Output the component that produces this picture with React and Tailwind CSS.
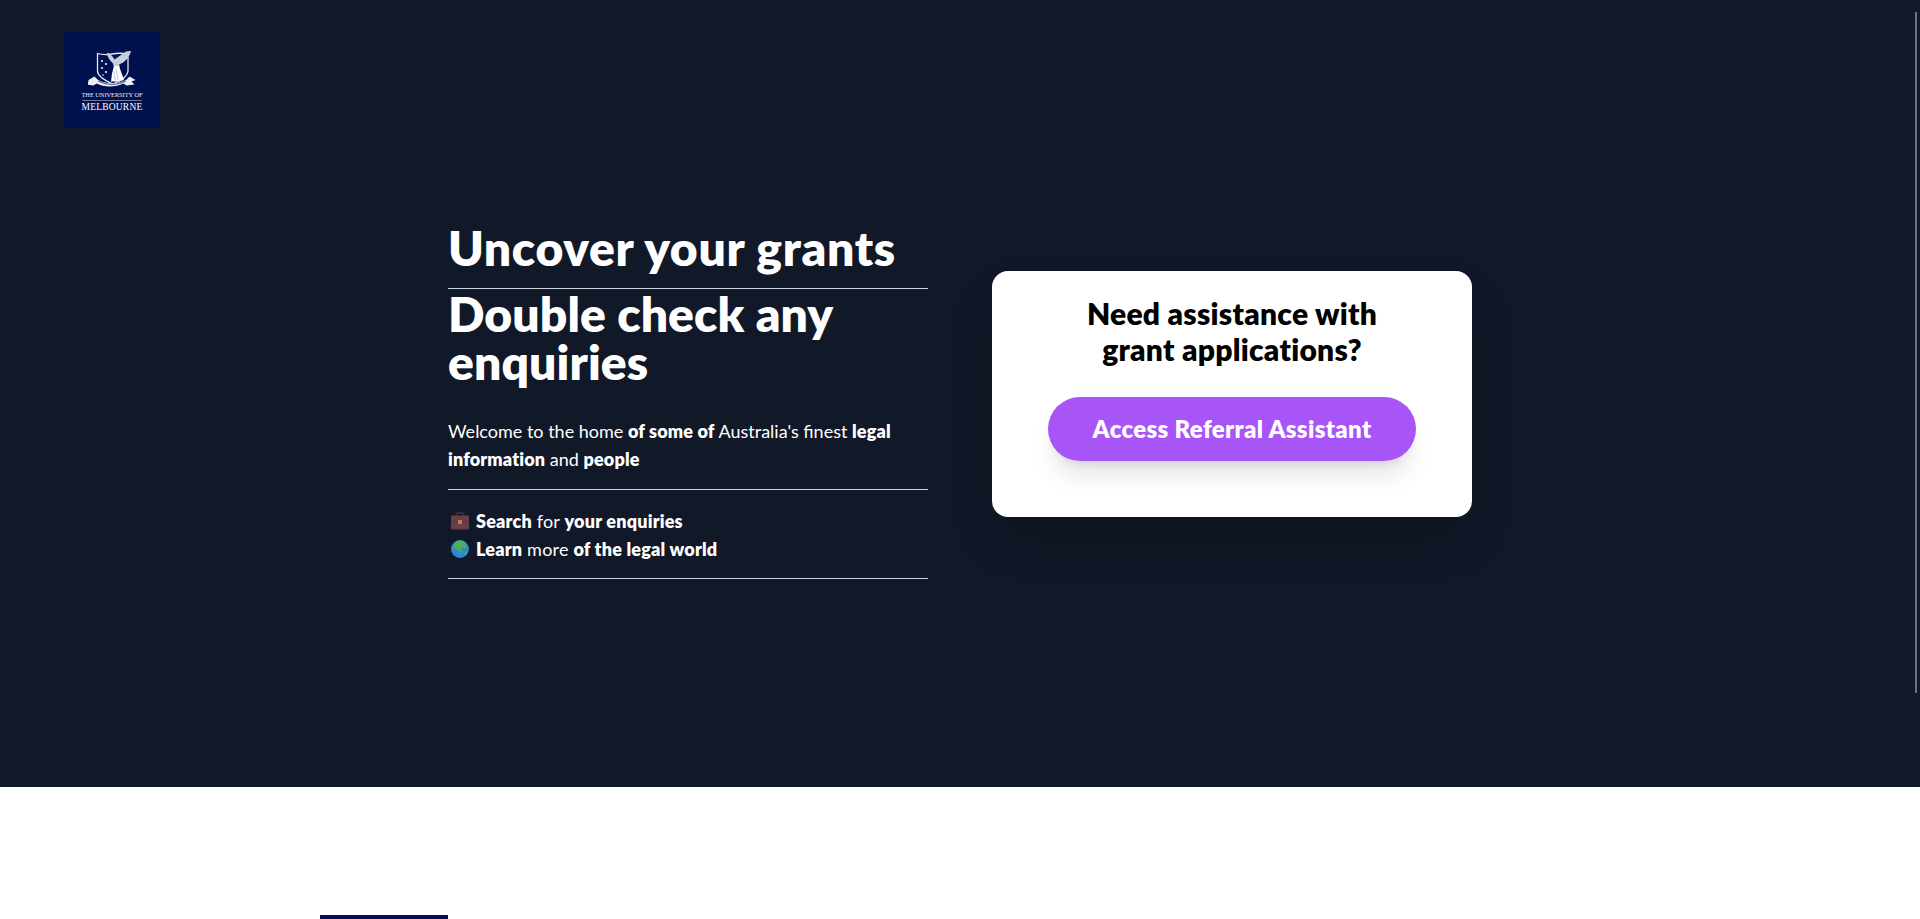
const font = { fontFamily: 'Lato, "Noto Sans", sans-serif' }

function Crest() {
  return (
    <svg width="48" height="37" viewBox="0 0 48 37" className="block">
      {/* shield */}
      <path d="M9.500 2.500c5 1.500 9 1.500 14.500 0.500 5-1 10-1 16 0v17c0 6-8 10-15 13-7-3-15.500-7-15.500-13Z" fill="#001150" stroke="#e6e8f0" strokeWidth="1.300" />
      {/* stars */}
      <circle cx="14" cy="10" r="1.100" fill="#eef0f6" />
      <circle cx="18" cy="13" r="1.100" fill="#eef0f6" />
      <circle cx="14" cy="17" r="1.100" fill="#eef0f6" />
      <circle cx="18" cy="21" r="1.100" fill="#eef0f6" />
      <circle cx="15" cy="24" r="0.800" fill="#eef0f6" />
      {/* victory figure with wings */}
      <path d="M19 1.500c3 1 6 4 7.500 7L38 0.500c2 0 4-0.500 5-1-1 6-6 12-12 14l1 3h-6l-1-4c-3-3-6-7-6-11Z" fill="#c9cde0" />
      <path d="M26 15h5l5 14-5 1.500H23l1-8Z" fill="#fff" />
      <path d="M28 18l2 11M26 20l1 9" stroke="#9aa2c2" strokeWidth="0.600" />
      {/* ribbon */}
      <path d="M0.500 29l6-3.500 3 3c7 5 22 5 29 0l3-3 6 3.500-4 1.500 3 3-8 1-3-2c-8 4-19 4-27 0l-3 2-8-1 3-3Z" fill="#eef0f6" />
      <path d="M10 30c8 4.500 20 4.500 28 0" stroke="#39456f" strokeWidth="0.900" fill="none" />
    </svg>
  )
}

function Logo() {
  return (
    <div className="w-24 h-24 bg-[#001150] flex flex-col items-center pt-[19px] text-[#eef0f6]" style={{ fontFamily: '"Liberation Serif", serif' }}>
      <Crest />
      <div className="text-[6.300px] leading-[9px] mt-[2px] whitespace-nowrap">THE UNIVERSITY OF</div>
      <div className="w-[60px] h-px bg-[#6d7699] mt-[1px]" />
      <div className="text-[9.500px] leading-[11px] mt-[1px] tracking-[0.2px] whitespace-nowrap text-white">MELBOURNE</div>
    </div>
  )
}

function Briefcase() {
  return (
    <svg width="20" height="18" viewBox="0 0 20 18" className="block">
      <path d="M6.500 4V2.400C6.500 1.600 7 1 8 1h4c1 0 1.500.6 1.500 1.400V4" stroke="#4a3038" strokeWidth="1.500" fill="none" />
      <rect x="1" y="3.500" width="18" height="14" rx="1.500" fill="#6b3f49" />
      <rect x="1" y="9.500" width="18" height="1" fill="#5a343d" />
      <rect x="8" y="8" width="4" height="4" rx="0.500" fill="#c9784f" />
    </svg>
  )
}

function Globe() {
  return (
    <svg width="20" height="20" viewBox="0 0 20 20" className="block">
      <circle cx="10" cy="10" r="9" fill="#2f86d6" />
      <path d="M6 2.500c3-1.500 6-1.500 8 0l3 4-2 3-3-1-1 2 2 2-2 3-1-3-3-2-3-1-1-2Z" fill="#4fae5c" />
      <path d="M15 13l2-1-1 3-2 2Z" fill="#4fae5c" />
    </svg>
  )
}

export default function App() {
  return (
    <div className="h-screen overflow-hidden flex flex-col bg-white relative" style={font}>
      <section className="h-[787px] shrink-0 bg-[#111827] relative">
        <div className="pt-8 pl-16">
          <Logo />
        </div>
        <div className="w-[1024px] mx-auto mt-[96px] flex gap-16 items-start">
          <div className="w-[480px] text-white">
            <h1 className="text-[48px] leading-[48px] font-extrabold tracking-[0.7px]">Uncover your grants</h1>
            <hr className="border-[#cbd5e1] mt-[16px] mb-px" />
            <h1 className="text-[48px] leading-[48px] font-extrabold tracking-[0.1px]">Double check any enquiries</h1>
            <p className="text-lg leading-7 mt-[31px]">
              Welcome to the home <b className="font-extrabold tracking-[0.15px]">of some of</b> Australia's finest <b className="font-extrabold tracking-[0.15px]">legal information</b> and <b className="font-extrabold tracking-[0.15px]">people</b>
            </p>
            <hr className="border-[#cbd5e1] mt-[16px] mb-[17px]" />
            <div className="text-lg leading-7 tracking-[0.2px]">
              <div className="flex items-center gap-[6px] pl-[2px]">
                <Briefcase />
                <span><b className="font-extrabold">Search</b> for <b className="font-extrabold">your enquiries</b></span>
              </div>
              <div className="flex items-center gap-[6px] pl-[2px]">
                <Globe />
                <span><b className="font-extrabold">Learn</b> more <b className="font-extrabold">of the legal world</b></span>
              </div>
            </div>
            <hr className="border-[#cbd5e1] mt-[15px]" />
          </div>
          <div className="w-[480px] h-[246px] mt-[47px] bg-white rounded-2xl shadow-2xl flex flex-col items-center pt-6">
            <h2 className="text-3xl leading-9 font-extrabold text-black text-center tracking-[0.25px]">Need assistance with<br />grant applications?</h2>
            <button className="mt-[30px] w-[368px] h-16 rounded-full bg-[#a855f7] text-white text-2xl font-extrabold tracking-[0.35px] shadow-xl">Access Referral Assistant</button>
          </div>
        </div>
        <div className="absolute right-[3px] top-3 w-[2px] h-[681px] bg-gray-500" />
      </section>
      <section className="flex-1 pl-80 pt-[128px]">
        <div className="w-32 h-32 bg-[#001150]" />
      </section>
    </div>
  )
}
